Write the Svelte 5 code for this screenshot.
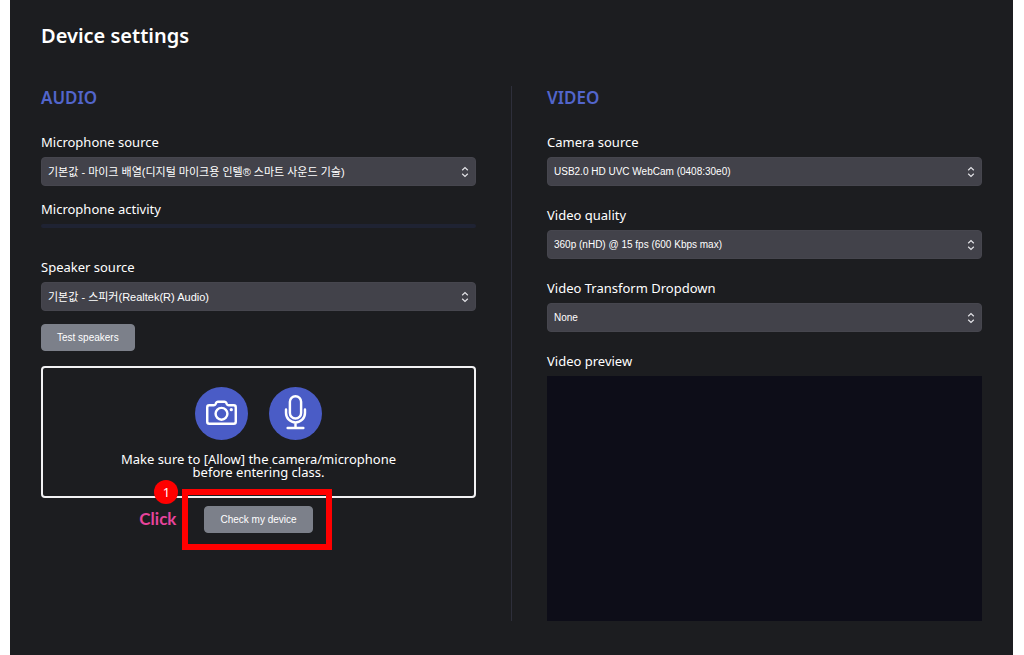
<script lang="ts">
	interface SelectField {
		id: string;
		label: string;
		options: string[];
	}

	const microphone: SelectField = {
		id: 'microphone-source',
		label: 'Microphone source',
		options: ['기본값 - 마이크 배열(디지털 마이크용 인텔® 스마트 사운드 기술)']
	};

	const speaker: SelectField = {
		id: 'speaker-source',
		label: 'Speaker source',
		options: ['기본값 - 스피커(Realtek(R) Audio)']
	};

	const videoFields: SelectField[] = [
		{
			id: 'camera-source',
			label: 'Camera source',
			options: ['USB2.0 HD UVC WebCam (0408:30e0)']
		},
		{
			id: 'video-quality',
			label: 'Video quality',
			options: ['360p (nHD) @ 15 fps (600 Kbps max)']
		},
		{
			id: 'video-transform',
			label: 'Video Transform Dropdown',
			options: ['None']
		}
	];
</script>

{#snippet selectField(field: SelectField)}
	<div class="field">
		<label class="label" for={field.id}>{field.label}</label>
		<div class="select-wrap">
			<select id={field.id}>
				{#each field.options as option}
					<option>{option}</option>
				{/each}
			</select>
			<svg class="arrows" viewBox="0 0 8 12" aria-hidden="true">
				<path d="M1.2 4.2 4 1.6l2.8 2.6M1.2 7.8 4 10.4l2.8-2.6" />
			</svg>
		</div>
	</div>
{/snippet}

<main class="page">
	<h1>Device settings</h1>

	<div class="columns">
		<section class="audio">
			<h2>AUDIO</h2>
			{@render selectField(microphone)}
			<div class="activity">
				<span class="label">Microphone activity</span>
				<div class="meter"></div>
			</div>
			{@render selectField(speaker)}
			<button class="button test" type="button">Test speakers</button>

			<div class="notice">
				<div class="icons">
					<svg class="icon" viewBox="0 0 52 52" aria-hidden="true">
						<circle cx="26" cy="26" r="26" />
						<path
							d="M14 18h4.400q1.200 0 1.700-1l.8-1.700q.5-.9 1.500-.9h6.600q1 0 1.500.9l.8 1.700q.5 1 1.700 1H38q2 0 2 2v14q0 2-2 2H14q-2 0-2-2V20q0-2 2-2z"
						/>
						<circle cx="26" cy="26.300" r="5.800" />
						<circle class="dot" cx="35.600" cy="22.300" r="1.600" />
					</svg>
					<svg class="icon" viewBox="0 0 52 52" aria-hidden="true">
						<circle cx="26" cy="26" r="26" />
						<rect x="20.500" y="9" width="11" height="22" rx="5.500" />
						<path d="M16.700 22v3.500a9.300 9.300 0 0 0 18.600 0V22M26 35v5.300M18.300 40.300h15.400" />
					</svg>
				</div>
				<p>Make sure to [Allow] the camera/microphone<br />before entering class.</p>
			</div>

			<div class="check">
				<button class="button" type="button">Check my device</button>
				<div class="highlight"></div>
				<span class="step">1</span>
				<strong class="hint">Click</strong>
			</div>
		</section>

		<div class="divider"></div>

		<section class="video">
			<h2>VIDEO</h2>
			{#each videoFields as field (field.id)}
				{@render selectField(field)}
			{/each}
			<span class="label">Video preview</span>
			<div class="preview"></div>
		</section>
	</div>
</main>

<style>
	:global(body) {
		margin: 0;
		background: #fff;
	}

	.page {
		box-sizing: border-box;
		min-height: 100vh;
		margin: 0 11px 0 10px;
		padding: 22px 31px 34px;
		background: #1c1d20;
		color: #fff;
		font-family: 'Noto Sans', 'Noto Sans CJK KR', sans-serif;
	}

	h1 {
		margin: 0 0 36px;
		font-size: 20px;
		font-weight: 600;
		line-height: 28px;
	}

	h2 {
		margin: 0 0 22px;
		color: #5265cb;
		font-size: 17px;
		font-weight: 600;
		line-height: 24px;
	}

	.columns {
		display: grid;
		grid-template-columns: 1fr 1px 1fr;
		column-gap: 35px;
	}

	.divider {
		background: #2e2f3b;
	}

	.label {
		display: block;
		margin-bottom: 5px;
		font-size: 13px;
		line-height: 20px;
	}

	.select-wrap {
		position: relative;
	}

	select {
		appearance: none;
		display: block;
		box-sizing: border-box;
		width: 100%;
		height: 29px;
		padding: 0 24px 0 6px;
		border: 1px solid #46464e;
		border-radius: 4px;
		background: #42424a;
		color: #fff;
		font-family: 'Liberation Sans', 'Noto Sans CJK KR', sans-serif;
		font-size: 11px;
	}

	.arrows {
		position: absolute;
		top: 9px;
		right: 7px;
		width: 8px;
		height: 12px;
		fill: none;
		stroke: #e4e4e8;
		stroke-width: 1.2;
	}

	.activity {
		margin: 13px 0 29px;
	}

	.meter {
		height: 4px;
		border-radius: 2px;
		background: #1f2333;
	}

	.button {
		display: block;
		height: 27px;
		padding: 0 15px;
		border: 1px solid #7c808a;
		border-radius: 4px;
		background: #7c808a;
		color: #fff;
		font-family: 'Liberation Sans', sans-serif;
		font-size: 10px;
	}

	.test {
		margin-top: 13px;
	}

	.notice {
		box-sizing: border-box;
		margin: 15px 0 8px;
		padding: 19px 10px 17px;
		border: 2px solid #f2f2f4;
		border-radius: 4px;
		text-align: center;
	}

	.icons {
		display: flex;
		justify-content: center;
		gap: 21px;
	}

	.icon {
		width: 53px;
		height: 53px;
		fill: none;
		stroke: #fff;
		stroke-width: 2.4;
		stroke-linecap: round;
	}

	.icon circle:first-child {
		fill: #4a5cc6;
		stroke: none;
	}

	.icon .dot {
		fill: #fff;
		stroke: none;
	}

	.notice p {
		margin: 13px 0 0;
		font-size: 13px;
		line-height: 13px;
	}

	.check {
		position: relative;
		width: fit-content;
		margin: 0 auto;
	}

	.highlight {
		position: absolute;
		inset: -17px -19px -17px -22px;
		border: 6px solid #f00;
		pointer-events: none;
	}

	.step {
		position: absolute;
		top: -26px;
		left: -50px;
		width: 24px;
		height: 24px;
		border-radius: 50%;
		background: #f00;
		font-size: 13px;
		line-height: 24px;
		text-align: center;
	}

	.hint {
		position: absolute;
		top: 1px;
		right: 100%;
		margin-right: 28px;
		color: #e8449c;
		font-family: Lato, sans-serif;
		font-size: 17px;
		line-height: 24px;
	}

	.video .field {
		margin-bottom: 19px;
	}

	.video select {
		font-size: 10px;
	}

	.preview {
		aspect-ratio: 16 / 9;
		background: #0d0d18;
	}
</style>
